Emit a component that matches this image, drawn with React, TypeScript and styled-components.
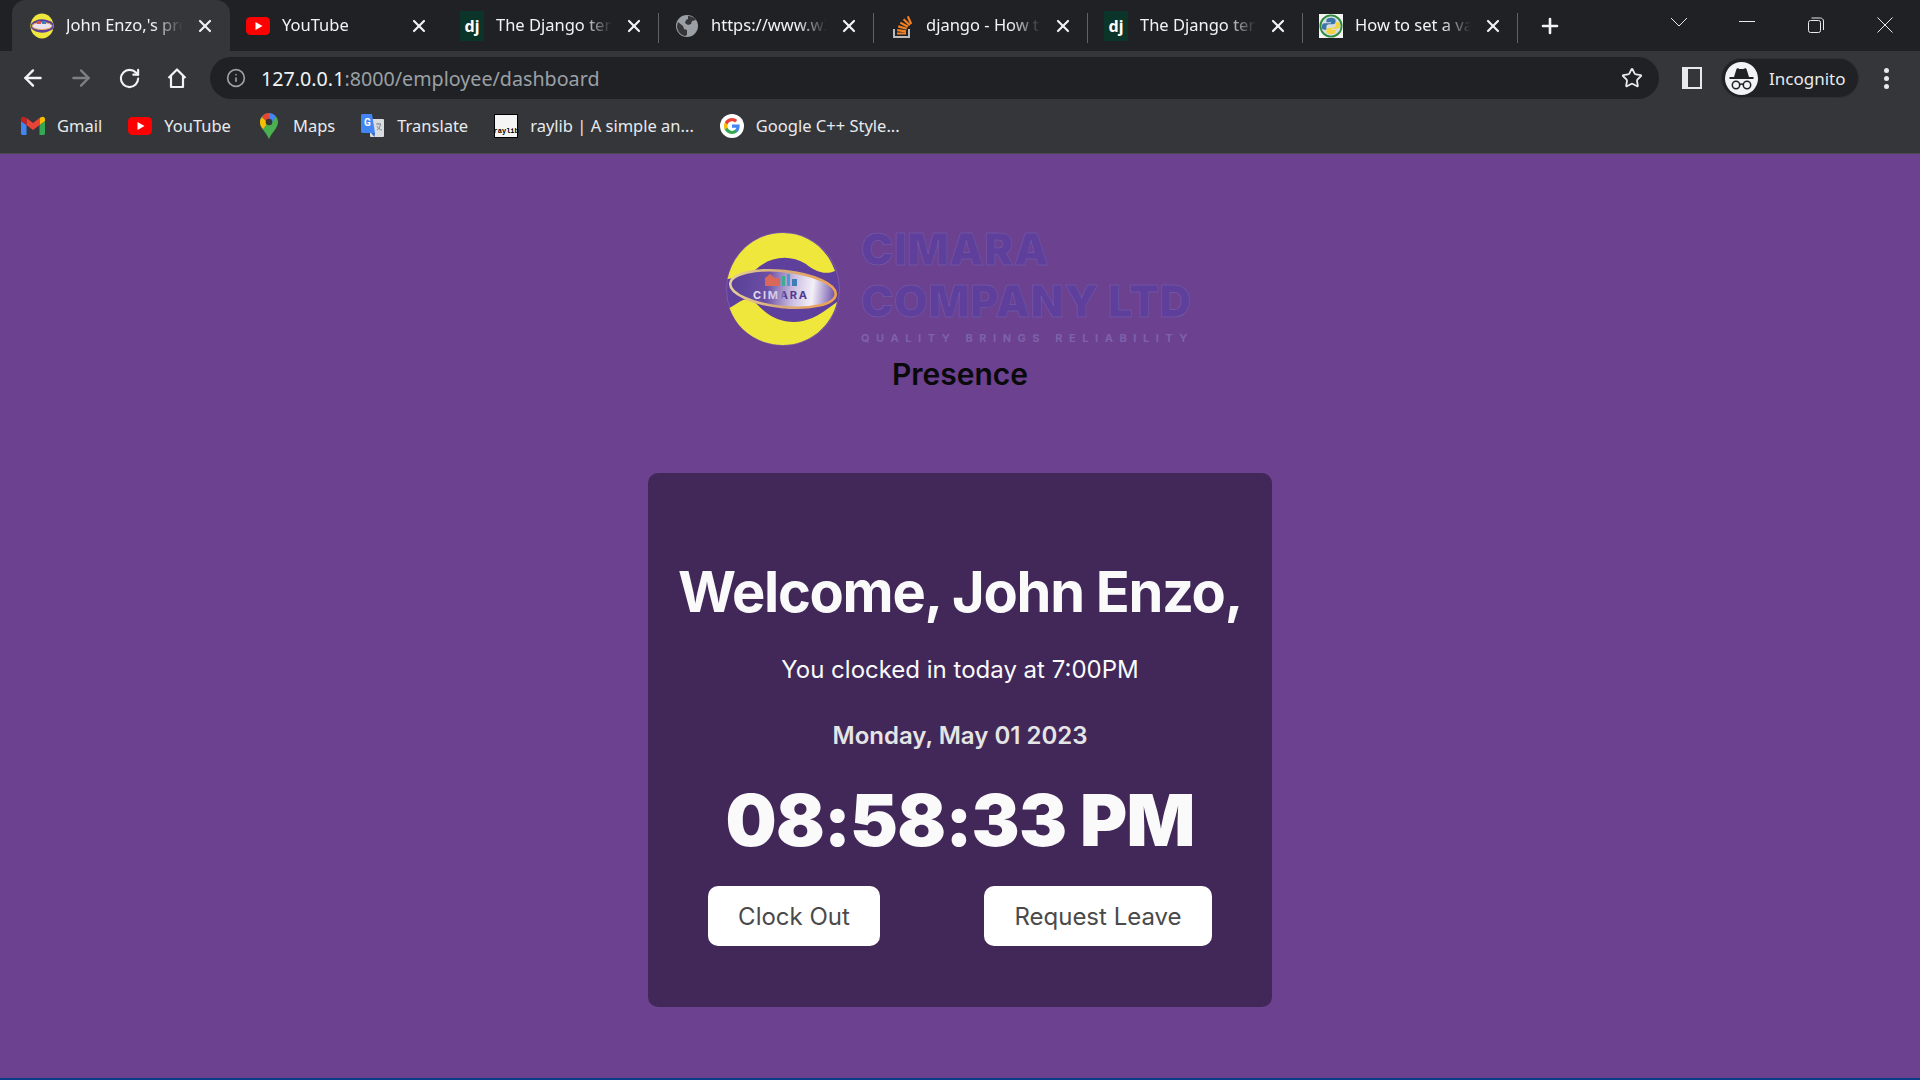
import React from "react";
import styled, { createGlobalStyle } from "styled-components";
import { ArrowLeft, ArrowRight, RotateCw, Star, X, Plus, Info } from "lucide-react";

const GlobalStyle = createGlobalStyle`
  html, body {
    margin: 0;
    padding: 0;
    background: #6b4190;
  }
  * {
    box-sizing: border-box;
  }
`;

const CHROME_FONT = `"Noto Sans", "Open Sans", sans-serif`;

const Screen = styled.div`
  width: 1920px;
  height: 1080px;
  overflow: hidden;
  display: flex;
  flex-direction: column;
`;

const TabStrip = styled.div`
  height: 51px;
  background: #202124;
  display: flex;
  align-items: stretch;
  padding-left: 12px;
  font-family: ${CHROME_FONT};
`;

const Tab = styled.div<{ $active?: boolean; $sep?: boolean; $width: number }>`
  position: relative;
  width: ${p => p.$width}px;
  display: flex;
  align-items: center;
  padding: 0 15px 0 ${p => (p.$active ? 18 : 16)}px;
  gap: 12px;
  color: #f1f3f4;
  font-size: 16.5px;
  background: ${p => (p.$active ? "#35363a" : "transparent")};
  border-radius: ${p => (p.$active ? "14px 14px 0 0" : "0")};
  &::after {
    content: "";
    display: ${p => (p.$sep ? "block" : "none")};
    position: absolute;
    right: 0;
    top: 13px;
    height: 30px;
    width: 1px;
    background: #5f6368;
  }
`;

const TabTitle = styled.span`
  flex: 1;
  min-width: 0;
  white-space: nowrap;
  margin-top: -3px;
  -webkit-mask-image: linear-gradient(to left, transparent 0, #000 30px);
  mask-image: linear-gradient(to left, transparent 0, #000 30px);
`;

const Favicon = styled.span`
  width: 24px;
  height: 24px;
  flex: none;
  display: flex;
  align-items: center;
  justify-content: center;
`;

const DjangoBadge = styled.span`
  width: 24px;
  height: 30px;
  background: #0c3529;
  color: #fff;
  font-size: 16px;
  font-weight: 700;
  display: flex;
  align-items: center;
  justify-content: center;
`;

const CloseBtn = styled.span`
  color: #f1f3f4;
  display: flex;
  flex: none;
`;

const NewTab = styled.div`
  display: flex;
  align-items: center;
  margin-left: 20px;
  color: #f1f3f4;
`;

const WindowControls = styled.div`
  margin-left: auto;
  display: flex;
  align-items: flex-start;
  padding-top: 17px;
  padding-right: 27px;
  color: #e8eaed;
`;

const WinButton = styled.span<{ $gap: number }>`
  display: flex;
  margin-left: ${p => p.$gap}px;
`;

const Toolbar = styled.div`
  height: 54px;
  background: #35363a;
  display: flex;
  align-items: center;
  padding: 0 21px 0 20px;
  font-family: ${CHROME_FONT};
`;

const NavButton = styled.span<{ $dim?: boolean }>`
  width: 26px;
  height: 26px;
  margin-right: 22px;
  display: flex;
  align-items: center;
  justify-content: center;
  color: ${p => (p.$dim ? "#7d7f83" : "#f1f3f4")};
`;

const Omnibox = styled.div`
  width: 1449px;
  height: 42px;
  margin-left: -2px;
  border-radius: 21px;
  background: #202124;
  display: flex;
  align-items: center;
  padding: 0 16px 0 16px;
  font-size: 19.7px;
  color: #9aa0a6;
`;

const UrlHost = styled.span`
  color: #f1f3f4;
`;

const UrlText = styled.div`
  margin-left: 15px;
  flex: 1;
  white-space: nowrap;
`;

const SidePanelIcon = styled.span`
  margin-left: 23px;
  width: 20px;
  height: 22px;
  border: 2px solid #e8eaed;
  border-left-width: 6px;
  display: block;
`;

const ProfilePill = styled.div`
  margin-left: 19px;
  width: 138px;
  height: 40px;
  border-radius: 20px;
  background: #202124;
  border: 1px solid #2e2f33;
  display: flex;
  align-items: center;
  padding-left: 3px;
  gap: 11px;
  color: #e8eaed;
  font-size: 17px;
`;

const Avatar = styled.span`
  width: 33px;
  height: 33px;
  border-radius: 50%;
  background: #f1f3f4;
  display: flex;
  align-items: center;
  justify-content: center;
  flex: none;
`;

const Dots = styled.span`
  margin-left: 25px;
  display: flex;
  flex-direction: column;
  gap: 3px;
  i {
    width: 5px;
    height: 5px;
    border-radius: 50%;
    background: #e8eaed;
    display: block;
  }
`;

const BookmarkBar = styled.div`
  height: 49px;
  background: #35363a;
  border-bottom: 1px solid #4b4c50;
  display: flex;
  align-items: center;
  padding: 0 0 7px 21px;
  gap: 26px;
  font-family: ${CHROME_FONT};
  font-size: 16.5px;
  color: #e8eaed;
`;

const Bookmark = styled.div`
  display: flex;
  align-items: center;
  gap: 12px;
  white-space: nowrap;
`;

const RaylibIcon = styled.span`
  width: 24px;
  height: 24px;
  background: #f5f5f5;
  border: 1px solid #000;
  color: #000;
  font-family: "Liberation Mono", monospace;
  font-size: 7px;
  font-weight: 700;
  display: flex;
  align-items: flex-end;
  justify-content: center;
  padding-bottom: 2px;
`;

const Main = styled.main`
  flex: 1;
  background: #6b4190;
  border-bottom: 2px solid #0b3c86;
  display: flex;
  flex-direction: column;
  align-items: center;
  padding-top: 69px;
  font-family: Inter, sans-serif;
`;

const LogoRow = styled.div`
  width: 470px;
  height: 128px;
  display: flex;
  align-items: flex-start;
  gap: 20px;
  svg {
    margin-top: 8px;
    flex: none;
  }
`;

const LogoText = styled.div`
  display: flex;
  flex-direction: column;
  color: #5e3f9c;
  font-family: Inter, sans-serif;
  font-weight: 900;
  -webkit-text-stroke: 0.5px #7a62ad;
  white-space: nowrap;
`;

const LogoLine = styled.div`
  font-size: 43.5px;
  line-height: 52px;
  letter-spacing: 0.5px;
`;

const LogoTag = styled.div`
  margin-top: 4px;
  font-size: 11px;
  line-height: 14px;
  letter-spacing: 6.55px;
  font-weight: 700;
  -webkit-text-stroke: 0;
  color: #7e61aa;
`;

const Heading = styled.h2`
  margin: 5px 0 0;
  font-size: 30px;
  line-height: 36px;
  font-weight: 600;
  color: #0a0a0a;
`;

const Card = styled.section`
  width: 624px;
  height: 534px;
  margin-top: 81px;
  background: #412859;
  border-radius: 10px;
  display: flex;
  flex-direction: column;
  align-items: center;
  color: #fafafa;
`;

const Welcome = styled.h1`
  margin: 85px 0 0;
  font-size: 56px;
  line-height: 68px;
  font-weight: 700;
  letter-spacing: -1.3px;
  white-space: nowrap;
`;

const ClockedIn = styled.p`
  margin: 29px 0 0;
  font-size: 24px;
  line-height: 30px;
  font-weight: 400;
`;

const DateText = styled.p`
  margin: 36px 0 0;
  font-size: 24px;
  line-height: 30px;
  font-weight: 600;
  color: #e5e5e5;
`;

const ClockText = styled.div`
  margin-top: 25px;
  font-size: 72px;
  line-height: 88px;
  font-weight: 900;
  letter-spacing: -0.75px;
`;

const ButtonRow = styled.div`
  display: flex;
  justify-content: space-between;
  width: 504px;
  margin-top: 22px;
`;

const ActionButton = styled.button<{ $width: number }>`
  width: ${p => p.$width}px;
  height: 60px;
  border: none;
  border-radius: 10px;
  background: #fff;
  color: #4a4a4a;
  font-family: Inter, sans-serif;
  font-size: 24px;
  font-weight: 400;
`;

const YouTubeIcon = () => (
  <svg width="24" height="18" viewBox="0 0 24 18">
    <rect width="24" height="18" rx="4.5" fill="#f00" />
    <path d="M9.5 5v8l7-4z" fill="#fff" />
  </svg>
);

const CimaraFavicon = () => (
  <svg width="24" height="26" viewBox="0 0 24 26">
    <ellipse cx="12" cy="13" rx="11.5" ry="12.5" fill="#f0e73c" />
    <path d="M1 11C6 5 16 5 23 10v6C16 21 6 21 1 15z" fill="#5b3f9b" />
    <ellipse cx="12" cy="13" rx="10" ry="3.5" fill="#e9e4f2" stroke="#eea952" strokeWidth="1" />
    <rect x="7" y="8" width="4" height="3" fill="#d9534f" />
    <rect x="12" y="8" width="4" height="3" fill="#3b7fc4" />
  </svg>
);

const GlobeIcon = () => (
  <svg width="24" height="24" viewBox="0 0 24 24">
    <circle cx="12" cy="12" r="11" fill="#9aa0a6" />
    <path
      d="M3 8l5 4 1 3 3 1v5l-2 1C5 21 2 16 2 12zM13 2c3 0 6 1 8 4l-4 1-1 3-3 1-3-2 1-3 2-1z"
      fill="#35363a"
    />
  </svg>
);

const StackIcon = () => (
  <svg width="22" height="26" viewBox="0 0 22 26">
    <path d="M3 16v8h15v-8" fill="none" stroke="#bcbbbb" strokeWidth="2" />
    <path
      d="M6 20.5h9M6.2 17.2l8.8 1.2M7.2 13.4l8.5 2.4M9.3 9.6l7.6 4.2M12.6 6.2l6.2 6M16.8 3.4l3.4 7.6"
      fill="none"
      stroke="#f48024"
      strokeWidth="2.2"
    />
  </svg>
);

const PythonIcon = () => (
  <svg width="26" height="26" viewBox="0 0 26 26">
    <rect width="26" height="26" fill="#f4f4f4" />
    <circle cx="13" cy="13" r="11.5" fill="#d4dde0" stroke="#2e8b3c" strokeWidth="2" />
    <path d="M13 4c-3 0-5 1-5 3v2h5v1H6c-2 0-3 2-3 4s1 3 3 3h2v-3c0-2 1-3 3-3h4c2 0 3-1 3-3V7c0-2-2-3-5-3z" fill="#3a74a8" />
    <path d="M13 22c3 0 5-1 5-3v-2h-5v-1h7c2 0 3-2 3-4s-1-3-3-3h-2v3c0 2-1 3-3 3h-4c-2 0-3 1-3 3v1c0 2 2 3 5 3z" fill="#f5d33f" />
  </svg>
);

const Django = () => <DjangoBadge>dj</DjangoBadge>;

const GmailIcon = () => (
  <svg width="24" height="20" viewBox="0 0 24 20">
    <path d="M1.5 19h4V9L0 5v12.500C0 18.300.7 19 1.500 19z" fill="#4285f4" />
    <path d="M18.500 19h4c.8 0 1.500-.7 1.500-1.500V5l-5.500 4z" fill="#34a853" />
    <path d="M18.500 2v7L24 5V3c0-2-2.200-3-3.800-1.800z" fill="#fbbc04" />
    <path d="M5.500 9V2L12 7l6.500-5v7L12 14z" fill="#ea4335" />
    <path d="M0 3v2l5.500 4V2L3.800 1.200C2.200 0 0 1 0 3z" fill="#c5221f" />
  </svg>
);

const MapsIcon = () => (
  <svg width="18" height="26" viewBox="0 0 18 26">
    <path d="M9 0C4 0 0 4 0 9c0 6 6 10 9 17z" fill="#34a853" />
    <path d="M9 26c3-7 9-11 9-17 0-2-.7-3.800-1.800-5.200L3 16c2.500 3 4.800 6 6 10z" fill="#4caf50" />
    <path d="M2 4C.7 5.500 0 7 0 9c0 3 1.200 5 3 7l5-6z" fill="#fbbc04" />
    <path d="M2 4c1.700-2.500 4-4 7-4v6c-1.500 0-2.500.8-3 2z" fill="#ea4335" />
    <path d="M9 0c3 0 5.500 1.500 7.200 3.800L11.500 9.500 9 6z" fill="#4285f4" />
    <circle cx="9" cy="9" r="3.300" fill="#35363a" />
  </svg>
);

const TranslateIcon = () => (
  <svg width="24" height="24" viewBox="0 0 24 24">
    <rect x="9" y="5" width="14" height="18" rx="1" fill="#dadce0" />
    <path d="M15 10h5M17.500 9v1M16 16c2-1 3-3 3.500-6M16 12c1 2 3 4 5 4" stroke="#80868b" strokeWidth="1" fill="none" />
    <path d="M1.500 0H11l3 19H1.500C.7 19 0 18.300 0 17.500V1.500C0 .7.7 0 1.500 0z" fill="#4285f4" />
    <path d="M10 19l3.500 4 .5-4z" fill="#3367c8" />
    <text x="3" y="12" fontFamily="Roboto, sans-serif" fontSize="10" fontWeight="700" fill="#fff">G</text>
  </svg>
);

const GoogleIcon = () => (
  <svg width="24" height="24" viewBox="0 0 24 24">
    <circle cx="12" cy="12" r="12" fill="#fff" />
    <path d="M19.600 12.200c0-.6 0-1.100-.1-1.600H12v3.100h4.300c-.2 1-.7 1.800-1.600 2.400v2h2.600c1.500-1.400 2.300-3.400 2.300-5.900z" fill="#4285f4" />
    <path d="M12 20c2.200 0 4-.7 5.300-1.900l-2.600-2c-.7.500-1.600.8-2.700.8-2.100 0-3.900-1.400-4.500-3.300H4.800v2.100C6.100 18.200 8.900 20 12 20z" fill="#34a853" />
    <path d="M7.500 13.600c-.3-1-.3-2.100 0-3.100V8.400H4.800c-1.100 2.200-1.100 5 0 7.300z" fill="#fbbc04" />
    <path d="M12 7.200c1.200 0 2.200.4 3 1.200l2.300-2.300C15.900 4.800 14.100 4 12 4 8.900 4 6.100 5.800 4.800 8.400l2.700 2.100C8.100 8.600 9.900 7.200 12 7.200z" fill="#ea4335" />
  </svg>
);

const HomeIcon = () => (
  <svg width="22" height="22" viewBox="0 0 22 22" fill="none" stroke="currentColor" strokeWidth="2.2">
    <path d="M2.500 11L11 2.500 19.500 11M5 9v11h12V9" strokeLinejoin="round" />
  </svg>
);

const IncognitoIcon = () => (
  <svg width="27" height="27" viewBox="0 0 27 27" fill="none" stroke="#202124">
    <path d="M6 12l2.500-8c.2-.7 1-1 1.600-.7l1.400.7h4l1.400-.7c.6-.3 1.400 0 1.600.7l2.500 8z" fill="#202124" stroke="none" />
    <rect x="1.500" y="12" width="24" height="2" fill="#202124" stroke="none" />
    <circle cx="8" cy="20" r="3.700" strokeWidth="1.500" />
    <circle cx="19" cy="20" r="3.700" strokeWidth="1.500" />
    <path d="M11.500 19.500c1-.6 3-.6 4 0" strokeWidth="1.500" />
  </svg>
);

const LogoMark = () => (
  <svg width="116" height="116" viewBox="0 0 116 116">
    <defs>
      <linearGradient id="ring" x1="0" x2="1" y1="0" y2="0">
        <stop offset="0" stopColor="#e6cf98" />
        <stop offset="0.5" stopColor="#d8a878" />
        <stop offset="1" stopColor="#f0a34f" />
      </linearGradient>
      <linearGradient id="swoosh" x1="0" x2="1" y1="0" y2="0">
        <stop offset="0" stopColor="#5a3f98" />
        <stop offset="0.35" stopColor="#6a4fa4" />
        <stop offset="0.6" stopColor="#cdbfe2" />
        <stop offset="0.78" stopColor="#f3eff8" />
        <stop offset="1" stopColor="#6c50a6" />
      </linearGradient>
      <linearGradient id="mark" x1="0" x2="1" y1="0" y2="0">
        <stop offset="0" stopColor="#e6e0f2" />
        <stop offset="0.45" stopColor="#cfc6e4" />
        <stop offset="0.6" stopColor="#4e3a90" />
        <stop offset="1" stopColor="#4e3a90" />
      </linearGradient>
    </defs>
    <circle cx="58" cy="58" r="56.500" fill="#5e3f9c" stroke="#8a6bb5" strokeWidth="0.600" />
    <path
      d="M2.500 48C8 22 30 2 58 2c24 0 44 15 52 38-11 5-22-1-29-7-15-9-32-8-46 2-7 6-13 11-32.500 13z"
      fill="#f0e73c"
    />
    <path
      d="M4.500 77C12 99 33 114 58 114c26 0 48-18 54-43-10 7-20 16-34 19-14 3-29-1-40-11-7-7-13-13-20-10-5 2-8 5-13.500 8z"
      fill="#f0e73c"
    />
    <g transform="rotate(6 58 58)">
      <ellipse cx="58" cy="58" rx="53" ry="18" fill="url(#swoosh)" stroke="url(#ring)" strokeWidth="2.600" />
    </g>
    <rect x="40" y="47" width="15" height="8" fill="#d9685a" />
    <path d="M40 47l5-4 5 4z" fill="#d9685a" />
    <rect x="57" y="45" width="3" height="10" fill="#3cab8f" />
    <rect x="62" y="43" width="3" height="12" fill="#4d9ad1" />
    <rect x="67" y="48" width="5" height="7" fill="#3a7fb5" />
    <text x="28" y="68" fontFamily="Inter, sans-serif" fontSize="11" fontWeight="700" fill="url(#mark)" textLength="54">CIMARA</text>
  </svg>
);

const tabs = [
  { icon: <CimaraFavicon />, title: "John Enzo,'s pro", active: true, width: 218 },
  { icon: <YouTubeIcon />, title: "YouTube", width: 214 },
  { icon: <Django />, title: "The Django ten", sep: true, width: 215 },
  { icon: <GlobeIcon />, title: "https://www.w3", sep: true, width: 215 },
  { icon: <StackIcon />, title: "django - How t", sep: true, width: 214 },
  { icon: <Django />, title: "The Django ten", sep: true, width: 215 },
  { icon: <PythonIcon />, title: "How to set a va", sep: true, width: 215 },
];

const bookmarks = [
  { icon: <GmailIcon />, label: "Gmail" },
  { icon: <YouTubeIcon />, label: "YouTube" },
  { icon: <MapsIcon />, label: "Maps" },
  { icon: <TranslateIcon />, label: "Translate" },
  { icon: <RaylibIcon>raylib</RaylibIcon>, label: "raylib | A simple an..." },
  { icon: <GoogleIcon />, label: "Google C++ Style..." },
];

export default function App() {
  return (
    <Screen>
      <GlobalStyle />
      <TabStrip>
        {tabs.map((t, i) => (
          <Tab key={i} $active={t.active} $sep={t.sep} $width={t.width}>
            <Favicon>{t.icon}</Favicon>
            <TabTitle>{t.title}</TabTitle>
            <CloseBtn>
              <X size={20} strokeWidth={2.6} />
            </CloseBtn>
          </Tab>
        ))}
        <NewTab>
          <Plus size={24} strokeWidth={2.6} />
        </NewTab>
        <WindowControls>
          <WinButton $gap={0}>
            <svg width="18" height="10" viewBox="0 0 18 10" fill="none" stroke="currentColor">
              <path d="M1 1l8 8 8-8" />
            </svg>
          </WinButton>
          <WinButton $gap={51}>
            <svg width="16" height="10" viewBox="0 0 16 10" stroke="currentColor">
              <path d="M0 4.500h16" />
            </svg>
          </WinButton>
          <WinButton $gap={53}>
            <svg width="16" height="16" viewBox="0 0 16 16" fill="none" stroke="currentColor">
              <rect x="0.500" y="3.500" width="12" height="12" rx="2" />
              <path d="M3.500 1h9c1.500 0 3 1.500 3 3v9" />
            </svg>
          </WinButton>
          <WinButton $gap={53}>
            <svg width="16" height="16" viewBox="0 0 16 16" stroke="currentColor">
              <path d="M0.500 0.500l15 15M15.500 0.500l-15 15" />
            </svg>
          </WinButton>
        </WindowControls>
      </TabStrip>
      <Toolbar>
        <NavButton>
          <ArrowLeft size={26} strokeWidth={2.2} />
        </NavButton>
        <NavButton $dim>
          <ArrowRight size={26} strokeWidth={2.2} />
        </NavButton>
        <NavButton>
          <RotateCw size={23} strokeWidth={2.2} />
        </NavButton>
        <NavButton>
          <HomeIcon />
        </NavButton>
        <Omnibox>
          <Info size={20} strokeWidth={2} />
          <UrlText>
            <UrlHost>127.0.0.1</UrlHost>:8000/employee/dashboard
          </UrlText>
          <Star size={22} strokeWidth={2} color="#e8eaed" />
        </Omnibox>
        <SidePanelIcon />
        <ProfilePill>
          <Avatar>
            <IncognitoIcon />
          </Avatar>
          Incognito
        </ProfilePill>
        <Dots>
          <i />
          <i />
          <i />
        </Dots>
      </Toolbar>
      <BookmarkBar>
        {bookmarks.map(b => (
          <Bookmark key={b.label}>
            <Favicon>{b.icon}</Favicon>
            {b.label}
          </Bookmark>
        ))}
      </BookmarkBar>
      <Main>
        <LogoRow>
          <LogoMark />
          <LogoText>
            <LogoLine>CIMARA</LogoLine>
            <LogoLine>COMPANY LTD</LogoLine>
            <LogoTag>QUALITY BRINGS RELIABILITY</LogoTag>
          </LogoText>
        </LogoRow>
        <Heading>Presence</Heading>
        <Card>
          <Welcome>Welcome, John Enzo,</Welcome>
          <ClockedIn>You clocked in today at 7:00PM</ClockedIn>
          <DateText>Monday, May 01 2023</DateText>
          <ClockText>08:58:33 PM</ClockText>
          <ButtonRow>
            <ActionButton $width={172}>Clock Out</ActionButton>
            <ActionButton $width={228}>Request Leave</ActionButton>
          </ButtonRow>
        </Card>
      </Main>
    </Screen>
  );
}
